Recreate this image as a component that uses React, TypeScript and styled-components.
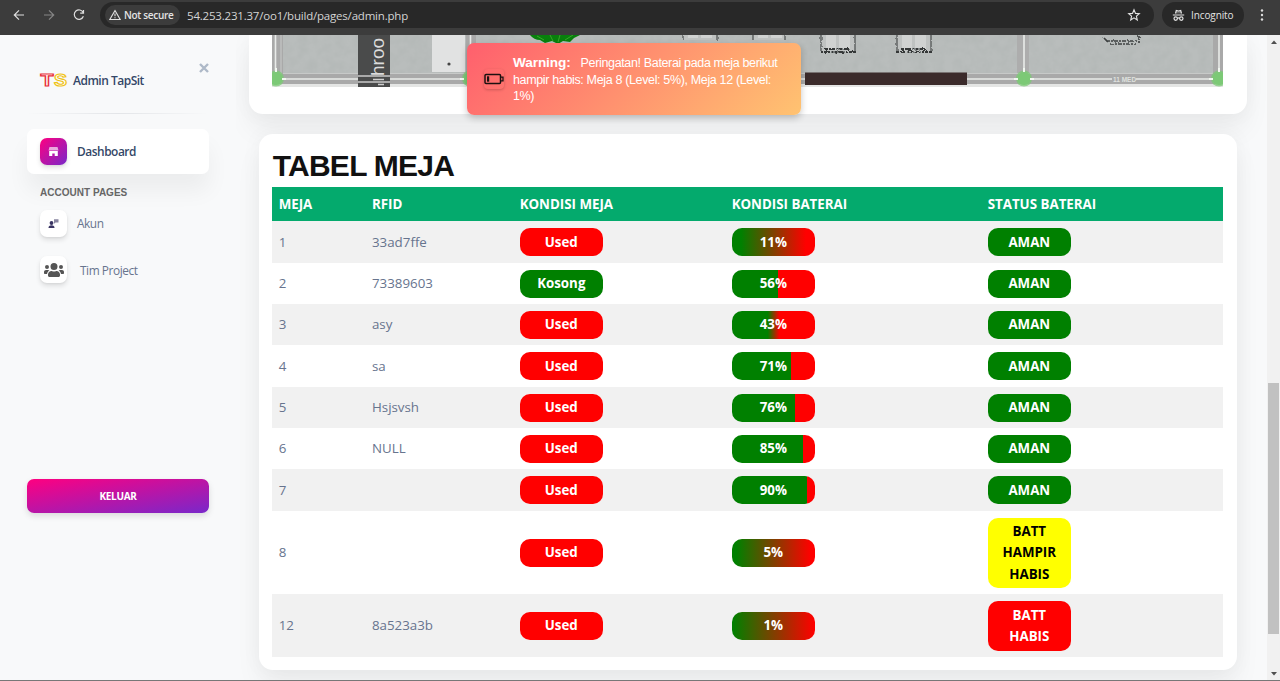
import React from "react";
import styled, { createGlobalStyle, css } from "styled-components";

const GlobalStyle = createGlobalStyle`
  *, *::before, *::after { box-sizing: border-box; }
  body {
    margin: 0;
    overflow: hidden;
    background: #f8f9fa;
    font-family: "Open Sans", sans-serif;
  }
`;

const Window = styled.div`
  position: relative;
  display: flex;
  flex-direction: column;
  width: 1280px;
  height: 681px;
  overflow: hidden;
  border-bottom: 1px solid #777;
`;

/* ---------- browser bar ---------- */

const Toolbar = styled.header`
  display: flex;
  align-items: flex-start;
  flex: 0 0 35px;
  padding: 2px 0 0 12px;
  background: #3c3c3c;
  color: #e3e3e3;
  z-index: 3;
`;

const NavIcon = styled.svg<{ $dim?: boolean }>`
  width: 14px;
  height: 14px;
  margin: 6px 16px 0 0;
  fill: none;
  stroke: ${(p) => (p.$dim ? "#858585" : "#dedede")};
  stroke-width: 1.2;
`;

const AddressBar = styled.div`
  display: flex;
  align-items: center;
  width: 1054px;
  height: 26px;
  margin-left: -2px;
  padding: 0 13px 0 5px;
  border-radius: 13px;
  background: #282828;
`;

const SecurityChip = styled.div`
  display: flex;
  align-items: center;
  gap: 3px;
  width: 75px;
  height: 20px;
  padding-left: 4px;
  border-radius: 10px;
  background: #3c3c3c;
  font-size: 10px;
  font-weight: 600;
  letter-spacing: -0.3px;
  white-space: nowrap;
`;

const Url = styled.span`
  flex: 1;
  margin-left: 7px;
  font-size: 11.5px;
  letter-spacing: -0.2px;
  color: #d4d4d4;
`;

const IncognitoChip = styled.div`
  display: flex;
  align-items: center;
  gap: 6px;
  width: 82px;
  height: 26px;
  margin: 0 16px 0 8px;
  padding-left: 10px;
  border-radius: 13px;
  background: #282828;
  font-size: 10px;
  letter-spacing: -0.1px;
`;

const MenuDots = styled.svg`
  width: 4px;
  height: 14px;
  margin-top: 6px;
  fill: #dedede;
`;

/* ---------- page ---------- */

const Page = styled.div`
  display: flex;
  flex: 1;
  min-height: 0;
  overflow: hidden;
`;

const Sidebar = styled.aside`
  flex: 0 0 236px;
  padding: 0 27px;
  color: #344767;
  background: #f8f9fa;
`;

const Brand = styled.div`
  position: relative;
  display: flex;
  align-items: center;
  height: 78px;
  padding: 13px 0 0 13px;
  font-size: 12px;
  font-weight: 600;
  letter-spacing: -0.5px;
  gap: 5px;
`;

const Logo = styled.svg`
  width: 28px;
  height: 20px;
  overflow: visible;
  font: bold 16px "Liberation Sans", sans-serif;
  letter-spacing: 0;
  fill: #fff;
  stroke-width: 1.1;
`;

const CloseIcon = styled.svg`
  position: absolute;
  top: 28px;
  right: 0;
  width: 10px;
  height: 10px;
  stroke: #aeb9c8;
  stroke-width: 2.4;
`;

const Divider = styled.hr`
  height: 1px;
  margin: 0 0 15px;
  border: 0;
  background: linear-gradient(90deg, transparent, #e3e5e8, transparent);
`;

const NavLink = styled.div<{ $active?: boolean; $gap?: number }>`
  display: flex;
  align-items: center;
  gap: ${(p) => p.$gap ?? 10}px;
  height: 45px;
  padding: 0 0 1px 13px;
  border-radius: 7px;
  font-size: 11.9px;
  letter-spacing: -0.45px;
  color: #67748e;

  & + & {
    margin-top: 1.6px;
  }
  ${(p) =>
    p.$active &&
    css`
      color: #344767;
      font-weight: 600;
      background: #fff;
      box-shadow: 0 17px 22px rgba(0, 0, 0, 0.05);
    `}
`;

const NavTile = styled.div<{ $active?: boolean }>`
  display: grid;
  place-items: center;
  width: 27px;
  height: 27px;
  border-radius: 7px;
  background: ${(p) => (p.$active ? "linear-gradient(135deg, #ff0080, #7928ca)" : "#fff")};
  box-shadow: 0 3px 5px rgba(0, 0, 0, 0.11), 0 1px 2px rgba(0, 0, 0, 0.05);
`;

const SectionLabel = styled.h6`
  height: 27px;
  margin: 0;
  padding-left: 13px;
  font: bold 10px/37px "Liberation Sans", sans-serif;
  color: #666;
  letter-spacing: 0.02px;
`;

const LogoutButton = styled.button`
  display: block;
  width: 182px;
  height: 34px;
  margin-top: 186.4px;
  padding: 0;
  border: 0;
  border-radius: 7px;
  background: linear-gradient(170deg, #ff0080, #7928ca);
  box-shadow: 0 3px 6px rgba(0, 0, 0, 0.12);
  color: #fff;
  font: bold 10px "Open Sans", sans-serif;
  letter-spacing: -0.3px;
`;

const Content = styled.main`
  display: flex;
  flex-direction: column;
  flex: 1;
  min-width: 0;
  padding-left: 13px;
  overflow: hidden;
`;

const MapCard = styled.section`
  flex: 0 0 79px;
  width: 998px;
  padding: 0 24px 0 23px;
  border-radius: 0 0 14px 14px;
  background: #fff;
  box-shadow: 0 17px 27px rgba(0, 0, 0, 0.05), 0 0 22px rgba(0, 0, 0, 0.04);
`;

const FloorPlan = styled.svg`
  display: block;
  width: 951px;
  height: 52px;
`;

const TableCard = styled.section`
  width: 978px;
  height: 536px;
  margin: 20px 0 0 10px;
  padding: 13px;
  border-radius: 14px;
  background: #fff;
  box-shadow: 0 17px 27px rgba(0, 0, 0, 0.05), 0 0 22px rgba(0, 0, 0, 0.04);
  z-index: 1;
`;

const Title = styled.h2`
  height: 39.7px;
  margin: 0;
  padding-left: 0.7px;
  font: bold 30px/37px "Liberation Sans", sans-serif;
  letter-spacing: -0.75px;
  color: #111;
`;

const Table = styled.table`
  width: 951px;
  border-collapse: collapse;
  table-layout: fixed;
  font-size: 13.33px;
  line-height: 21.33px;
  color: #67748e;

  th, td {
    padding: 7.2px 6.66px 6.13px;
    text-align: left;
  }
`;

const HeadRow = styled.tr`
  background: #04aa6d;
  color: #fff;
`;

const BodyRow = styled.tr`
  &:nth-child(odd) { background: #f1f1f1; }

  && > td {
    padding-top: 7px;
    padding-bottom: 6.33px;
  }
`;

const tones = {
  red: ["#ff0000", "#fff"],
  green: ["#008000", "#fff"],
  yellow: ["#ffff00", "#000"],
} as const;

const Pill = styled.div<{ $tone?: keyof typeof tones }>`
  width: 83.3px;
  padding: 3.33px 8px;
  border-radius: 10px;
  background: ${(p) => tones[p.$tone ?? "green"][0]};
  color: ${(p) => tones[p.$tone ?? "green"][1]};
  font-weight: 700;
  text-align: center;
`;

const ScrollTrack = styled.div`
  display: flex;
  flex-direction: column;
  align-items: center;
  justify-content: space-between;
  flex: 0 0 13px;
  padding: 5px 0 4px;
  background: #f1f1f1;
  z-index: 2;
`;

const ScrollThumb = styled.div`
  width: 11px;
  height: 251px;
  margin: 339px 0 auto;
  background: #c1c1c1;
`;

const ScrollArrow = styled.svg`
  width: 6px;
  height: 4px;
  fill: #505050;
`;

/* ---------- toast ---------- */

const Toast = styled.div`
  position: absolute;
  top: 43px;
  left: 467px;
  display: flex;
  align-items: center;
  width: 334px;
  height: 72px;
  padding: 1px 17px 0;
  border-radius: 7px;
  background: linear-gradient(135deg, #ff5f6d, #ffc371);
  box-shadow: 0 3px 7px rgba(0, 0, 0, 0.22);
  color: #fff;
  font: 12.5px/16.67px "Liberation Sans", sans-serif;
  letter-spacing: -0.35px;
  z-index: 4;
`;

const BatteryBadge = styled.div`
  flex: none;
  display: grid;
  place-items: center;
  width: 20px;
  height: 20px;
  margin: -1px 9px 0 0;
  border-radius: 4px;
  box-shadow: 0 1px 3px rgba(0, 0, 0, 0.2);
`;

const ToastLabel = styled.strong`
  margin-right: 10px;
  font-size: 13.6px;
  letter-spacing: -0.1px;
`;

const ToastLine = styled.div`
  height: 16.67px;
  padding-top: 0.5px;
  white-space: nowrap;
`;

/* ---------- data ---------- */

type Row = {
  meja: number;
  rfid: string;
  used: boolean;
  level: number;
  status: "AMAN" | "BATT HAMPIR HABIS" | "BATT HABIS";
};

const rows: Row[] = [
  { meja: 1, rfid: "33ad7ffe", used: true, level: 11, status: "AMAN" },
  { meja: 2, rfid: "73389603", used: false, level: 56, status: "AMAN" },
  { meja: 3, rfid: "asy", used: true, level: 43, status: "AMAN" },
  { meja: 4, rfid: "sa", used: true, level: 71, status: "AMAN" },
  { meja: 5, rfid: "Hsjsvsh", used: true, level: 76, status: "AMAN" },
  { meja: 6, rfid: "NULL", used: true, level: 85, status: "AMAN" },
  { meja: 7, rfid: "", used: true, level: 90, status: "AMAN" },
  { meja: 8, rfid: "", used: true, level: 5, status: "BATT HAMPIR HABIS" },
  { meja: 12, rfid: "8a523a3b", used: true, level: 1, status: "BATT HABIS" },
];

const statusTone = {
  AMAN: "green",
  "BATT HAMPIR HABIS": "yellow",
  "BATT HABIS": "red",
} as const;

const levelFill = (n: number) =>
  `linear-gradient(to right, #008000 ${n}%, #ff0000 ${100 - n}%)`;

const chairs = [
  { x: 411, w: 34, h: 7, seat: false },
  { x: 481, w: 32, h: 7, seat: false },
  { x: 549, w: 34, h: 19, seat: true },
  { x: 625, w: 34, h: 19, seat: true },
];

const Plan = () => (
  <FloorPlan viewBox="0 0 951 52">
    <defs>
      <filter id="concrete" x="0" y="0" width="100%" height="100%">
        <feTurbulence type="fractalNoise" baseFrequency="0.11" numOctaves="3" seed="4" />
        <feColorMatrix values="0 0 0 0 0.42  0 0 0 0 0.45  0 0 0 0 0.44  0.8 0 0 0 -0.24" />
      </filter>
      <filter id="rough" x="-10%" y="-10%" width="120%" height="130%">
        <feTurbulence type="fractalNoise" baseFrequency="0.4" numOctaves="2" />
        <feDisplacementMap in="SourceGraphic" scale="3" />
      </filter>
    </defs>
    <rect width="951" height="52" fill="#b9bdbc" />
    <rect width="951" height="52" filter="url(#concrete)" />
    {/* outer walls */}
    <rect y="39" width="951" height="10" fill="#a9a9a9" />
    <rect y="49" width="951" height="3" fill="#e4e5e4" />
    <rect width="11" height="49" fill="#a9a9a9" />
    <rect x="941" width="10" height="49" fill="#a9a9a9" />
    <rect x="194" width="10" height="49" fill="#a9a9a9" />
    <rect x="745" width="12" height="44" fill="#adadad" />
    <g stroke="#e9ebe9" strokeWidth="1.6" fill="none">
      <path d="M9 0V39" stroke="#c9cbca" strokeWidth="1" />
      <path d="M3.5 0V44H840M864 44H951M198.5 0V44M752 0V44M947 0V44" />
    </g>
    <path d="M11 38.5H941" stroke="#c7c9c8" />
    {/* door and corridor label */}
    <rect x="86" width="32" height="52" fill="#4a4b4b" />
    <path d="M86 41H118M86 47H118" stroke="#a9a9a9" strokeWidth="2" />
    <text
      transform="translate(112 41) rotate(-90)"
      fontFamily="Liberation Sans"
      fontSize="19"
      fill="#dcdcdc"
    >
      hroo
    </text>
    <path d="M101 44.500H112M106 49.500H112" stroke="#d0d0d0" strokeWidth="1.500" />
    <rect x="160" width="33" height="37" fill="#e1e2e2" />
    <circle cx="177" cy="29" r="1.6" fill="#444" />
    {/* plant */}
    <path
      d="M258 0Q262 5 268 5L273 8L280 6L286 9L291 6L298 7L302 3L308 0Z"
      fill="#08800c"
    />
    <path d="M265 1L272 5M278 0L281 6M288 0L286 7M301 0L293 5" stroke="#39a52b" />
    {/* chairs */}
    {chairs.map((c) => (
      <g key={c.x}>
        <rect x={c.x} width={c.w} height={c.h - 2} fill="#bfc2c1" />
        <rect x={c.x + 5} width="10" height={c.h - 4} fill="#d0d2d1" />
        <rect x={c.x + 18} width="11" height={c.h - 4} fill="#d0d2d1" />
        <g filter="url(#rough)">
          <path
            d={`M${c.x} 0V${c.h - 2}M${c.x + c.w} 0V${c.h - 2}`}
            stroke="#484b4b"
            strokeWidth="1.2"
          />
          {c.seat && (
            <path
              d={`M${c.x - 1} ${c.h - 2}H${c.x + c.w + 1}M${c.x + 4} ${c.h - 5}H${c.x + c.w - 4}`}
              stroke="#353838"
              strokeWidth="2"
              strokeDasharray="3 1 6 1.500 2 1"
            />
          )}
        </g>
      </g>
    ))}
    <path
      d="M832 3L836 7M867 1V8M834 6H866M838 9H864"
      stroke="#3c4040"
      strokeWidth="1.6"
      strokeDasharray="4 1 2 1"
      filter="url(#rough)"
    />
    <rect x="533" y="37.500" width="162" height="12.500" fill="#3b2b2b" />
    <text x="841" y="46.500" fontFamily="Liberation Sans" fontWeight="bold" fontSize="6.500" fill="#dfe1df">
      11 MED
    </text>
    {/* junction markers */}
    {[4, 198, 752, 947].map((x) => (
      <g key={x}>
        <circle cx={x} cy="43.500" r="8" fill="#7cc976" opacity=".75" />
        <circle cx={x} cy="43.500" r="6.500" fill="#7cc976" />
        <path
          d={`M${x - 10} 44h4M${x + 6} 44h4M${x} 33v4`}
          stroke="#f1f7f0"
          strokeWidth="2"
        />
      </g>
    ))}
  </FloorPlan>
);

export default function App() {
  return (
    <Window>
      <GlobalStyle />
      <Toolbar>
        <NavIcon viewBox="0 0 14 14">
          <path d="M12 7H2.500M7 2.300L2.300 7L7 11.700" />
        </NavIcon>
        <NavIcon viewBox="0 0 14 14" $dim>
          <path d="M2 7H11.500M7 2.300L11.700 7L7 11.700" />
        </NavIcon>
        <NavIcon viewBox="0 0 14 14">
          <path d="M11.200 4.500A4.700 4.700 0 1 0 11.400 8.200M11.500 2V5.200H8.200" />
        </NavIcon>
        <AddressBar>
          <SecurityChip>
            <svg width="12" height="12" viewBox="0 0 12 12" fill="none" stroke="#e3e3e3" strokeWidth="1.100">
              <path d="M6 1.500L11.200 10.500H.8ZM6 4.500V7.300M6 8.200V9.300" />
            </svg>
            Not secure
          </SecurityChip>
          <Url>54.253.231.37/oo1/build/pages/admin.php</Url>
          <svg width="14" height="14" viewBox="0 0 14 14" fill="none" stroke="#e3e3e3" strokeWidth="1.100">
            <path d="M7 1.800L8.500 5.400L12.300 5.700L9.400 8.200L10.300 12L7 9.900L3.700 12L4.600 8.200L1.700 5.700L5.500 5.400Z" />
          </svg>
        </AddressBar>
        <IncognitoChip>
          <svg width="13" height="13" viewBox="0 0 13 13" fill="none" stroke="#e3e3e3" strokeWidth="1.200">
            <path d="M3.500 4.500L4.300 1.500L6.500 2L8.700 1.500L9.500 4.500" fill="#e3e3e3" fillOpacity=".35" />
            <path d="M.8 6H12.200M5.300 9.200Q6.500 8.600 7.700 9.200" />
            <circle cx="3.700" cy="9.600" r="1.700" />
            <circle cx="9.300" cy="9.600" r="1.700" />
          </svg>
          Incognito
        </IncognitoChip>
        <MenuDots viewBox="0 0 4 14">
          <circle cx="2" cy="2.500" r="1.200" />
          <circle cx="2" cy="7" r="1.200" />
          <circle cx="2" cy="11.500" r="1.200" />
        </MenuDots>
      </Toolbar>

      <Page>
        <Sidebar>
          <Brand>
            <Logo viewBox="0 0 28 20">
              <text x="0.500" y="15" textLength="13" lengthAdjust="spacingAndGlyphs" stroke="#e8313b">T</text>
              <text x="14" y="15" textLength="13" lengthAdjust="spacingAndGlyphs" stroke="#efc318">S</text>
            </Logo>
            <span>Admin TapSit</span>
            <CloseIcon viewBox="0 0 10 10">
              <path d="M1 1L9 9M9 1L1 9" />
            </CloseIcon>
          </Brand>
          <Divider />
          <NavLink $active>
            <NavTile $active>
              <svg width="11" height="11" viewBox="0 0 11 11" fill="#fff">
                <path d="M1.500 1H9.500L10.500 4.500H.5Z" opacity=".65" />
                <path d="M1.200 5H9.800V10H6.700V7.500H4.300V10H1.200Z" />
              </svg>
            </NavTile>
            Dashboard
          </NavLink>
          <SectionLabel>ACCOUNT PAGES</SectionLabel>
          <NavLink>
            <NavTile>
              <svg width="11" height="11" viewBox="0 0 11 11" fill="#3a3563">
                <circle cx="3.500" cy="5" r="1.900" />
                <path d="M.5 10Q.5 7.300 3.500 7.300Q6.500 7.300 6.500 10Z" />
                <path d="M6 1.300H10.500V4.500H7.500L6 5.700Z" opacity=".6" />
              </svg>
            </NavTile>
            Akun
          </NavLink>
          <NavLink $gap={13}>
            <NavTile>
              <svg width="20" height="16" viewBox="0 0 640 512" fill="#555">
                <path d="M96 224a64 64 0 1 0 0-128 64 64 0 0 0 0 128zm448 0a64 64 0 1 0 0-128 64 64 0 0 0 0 128zm32 32h-64c-18 0-34 7-45 19 40 22 69 62 75 109h66c18 0 32-14 32-32v-32c0-35-29-64-64-64zm-256 0a112 112 0 1 0 0-224 112 112 0 0 0 0 224zm77 32h-8a155 155 0 0 1-138 0h-8c-64 0-115 52-115 115v29c0 27 21 48 48 48h288c27 0 48-21 48-48v-29c0-63-51-115-115-115zm-224-13c-11-12-27-19-45-19H64c-35 0-64 29-64 64v32c0 18 14 32 32 32h66c6-47 35-87 75-109z" />
              </svg>
            </NavTile>
            Tim Project
          </NavLink>
          <LogoutButton>KELUAR</LogoutButton>
        </Sidebar>

        <Content>
          <MapCard>
            <Plan />
          </MapCard>
          <TableCard>
            <Title>TABEL MEJA</Title>
            <Table>
              <colgroup>
                <col style={{ width: 93.3 }} />
                <col style={{ width: 147.7 }} />
                <col style={{ width: 212 }} />
                <col style={{ width: 256 }} />
                <col />
              </colgroup>
              <thead>
                <HeadRow>
                  <th>MEJA</th>
                  <th>RFID</th>
                  <th>KONDISI MEJA</th>
                  <th>KONDISI BATERAI</th>
                  <th>STATUS BATERAI</th>
                </HeadRow>
              </thead>
              <tbody>
                {rows.map((r) => (
                  <BodyRow key={r.meja}>
                    <td>{r.meja}</td>
                    <td>{r.rfid}</td>
                    <td>
                      <Pill $tone={r.used ? "red" : "green"}>{r.used ? "Used" : "Kosong"}</Pill>
                    </td>
                    <td>
                      <Pill style={{ background: levelFill(r.level) }}>{r.level}%</Pill>
                    </td>
                    <td>
                      <Pill $tone={statusTone[r.status]}>{r.status}</Pill>
                    </td>
                  </BodyRow>
                ))}
              </tbody>
            </Table>
          </TableCard>
        </Content>

        <ScrollTrack>
          <ScrollArrow viewBox="0 0 6 4">
            <path d="M0 4L3 .5L6 4Z" />
          </ScrollArrow>
          <ScrollThumb />
          <ScrollArrow viewBox="0 0 6 4">
            <path d="M0 0L3 3.500L6 0Z" />
          </ScrollArrow>
        </ScrollTrack>
      </Page>

      <Toast>
        <BatteryBadge>
          <svg width="20" height="12" viewBox="0 0 20 12">
            <rect x="1" y="1.500" width="15.500" height="9" rx="1" fill="none" stroke="#1c1010" strokeWidth="1.500" />
            <path d="M3 3.300H5.200V8.700H3Z" fill="#1c1010" />
            <path d="M17 4.200H19V7.800H17" fill="none" stroke="#1c1010" strokeWidth="1.300" />
          </svg>
        </BatteryBadge>
        <div>
          <ToastLine>
            <ToastLabel>Warning:</ToastLabel>
            Peringatan! Baterai pada meja berikut
          </ToastLine>
          <ToastLine>hampir habis: Meja 8 (Level: 5%), Meja 12 (Level:</ToastLine>
          <ToastLine>1%)</ToastLine>
        </div>
      </Toast>
    </Window>
  );
}
